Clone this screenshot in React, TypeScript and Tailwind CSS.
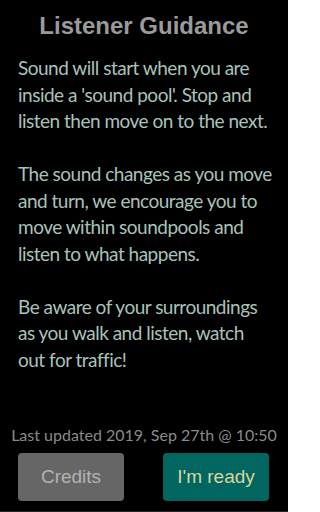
import React from "react";

const paragraphs = [
  ["Sound will start when you are", "inside a 'sound pool'. Stop and", "listen then move on to the next."],
  ["The sound changes as you move", "and turn, we encourage you to", "move within soundpools and", "listen to what happens."],
  ["Be aware of your surroundings", "as you walk and listen, watch", "out for traffic!"],
];

const App = () => {
  return (
    <div className="w-[288px] h-[512px] overflow-hidden bg-black flex flex-col border-b border-[#262626]">
      <h1 className="text-center text-[24px] leading-[28px] font-bold text-[#9a9a9a] pt-[12px] font-['Liberation_Sans',Arial,sans-serif]">
        Listener Guidance
      </h1>

      <div className="px-[18px] pt-[15px] flex flex-col gap-[26.5px] text-[19px] leading-[26.5px] tracking-[-0.5px] text-[#a9c2ba] font-['Lato','Carlito',sans-serif]">
        {paragraphs.map((lines, i) => (
          <p key={i} className="whitespace-nowrap">
            {lines.map((line, j) => (
              <React.Fragment key={j}>
                {line}
                {j < lines.length - 1 && <br />}
              </React.Fragment>
            ))}
          </p>
        ))}
      </div>

      <div className="mt-auto flex flex-col items-center">
        <p className="text-[16px] leading-[20px] text-[#8a8a8a] font-['Lato',sans-serif]">
          Last updated 2019, Sep 27th @ 10:50
        </p>
        <div className="w-full flex justify-between pl-[18px] pr-[19px] pt-[8px] pb-[10px] font-['Liberation_Sans',Arial,sans-serif]">
          <button className="w-[106px] h-[48px] rounded-[4px] bg-[#666666] text-[#b3b3b3] text-[19px]">
            Credits
          </button>
          <button className="w-[106px] h-[48px] rounded-[4px] bg-[#00665f] text-[#dcd59c] text-[19px]">
            I'm ready
          </button>
        </div>
      </div>
    </div>
  );
};

export default App;
